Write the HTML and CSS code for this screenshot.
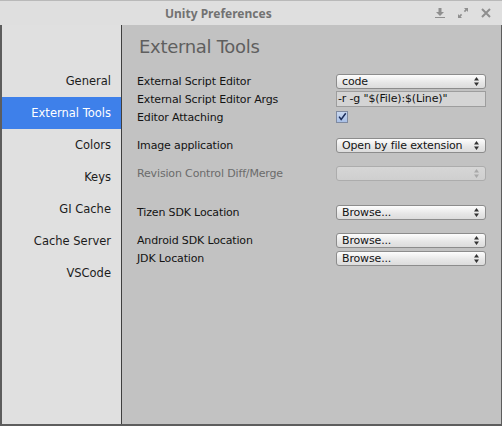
FILE: index.html
```html
<!DOCTYPE html>
<html>
<head>
<meta charset="utf-8">
<link rel="stylesheet" href="styles.css">
</head>
<body>
<div class="window">
  <div class="titlebar">
    <span class="title">Unity Preferences</span>
    <div class="tb-icons">
      <svg class="tb-icon" width="10" height="10" viewBox="0 0 10 10"><path d="M3.5 0h3v4h2.5l-4 4-4-4h2.5z M0 9h10v1H0z" fill="#8f8f8f"/></svg>
      <svg class="tb-icon" width="10" height="10" viewBox="0 0 10 10"><path d="M6 0h4v4L8.6 2.6 7 4.2 5.8 3 7.4 1.4z M0 10V6l1.4 1.4L3 5.8 4.2 7 2.6 8.6 4 10z" fill="#8f8f8f"/></svg>
      <svg class="tb-icon" width="10" height="10" viewBox="0 0 10 10"><path d="M1 1l8 8M9 1l-8 8" stroke="#8f8f8f" stroke-width="2"/></svg>
    </div>
  </div>
  <div class="main">
    <ul class="sidebar">
      <li class="nav">General</li>
      <li class="nav active">External Tools</li>
      <li class="nav">Colors</li>
      <li class="nav">Keys</li>
      <li class="nav">GI Cache</li>
      <li class="nav">Cache Server</li>
      <li class="nav">VSCode</li>
    </ul>
    <div class="content">
      <h1 class="heading">External Tools</h1>
      <div class="form">
        <div class="row">
          <span class="label">External Script Editor</span>
          <div class="popup"><span>code</span><svg class="arrows" width="5" height="9" viewBox="0 0 5 9"><path d="M2.5 0L5 3.5H0z M2.5 9L0 5.5h5z" fill="#333"/></svg></div>
        </div>
        <div class="row">
          <span class="label">External Script Editor Args</span>
          <div class="field">-r -g "$(File):$(Line)"</div>
        </div>
        <div class="row">
          <span class="label">Editor Attaching</span>
          <div class="check"><svg width="12" height="12" viewBox="0 0 12 12"><path d="M2.5 5.5l2.5 3.5L10.5 1.5" fill="none" stroke="#1b2d5a" stroke-width="1.8"/></svg></div>
        </div>
        <div class="row gap">
          <span class="label">Image application</span>
          <div class="popup"><span>Open by file extension</span><svg class="arrows" width="5" height="9" viewBox="0 0 5 9"><path d="M2.5 0L5 3.5H0z M2.5 9L0 5.5h5z" fill="#333"/></svg></div>
        </div>
        <div class="row gap">
          <span class="label disabled">Revision Control Diff/Merge</span>
          <div class="popup off"><span></span><svg class="arrows" width="5" height="9" viewBox="0 0 5 9"><path d="M2.5 0L5 3.5H0z M2.5 9L0 5.5h5z" fill="#a8a8a8"/></svg></div>
        </div>
        <div class="row biggap">
          <span class="label">Tizen SDK Location</span>
          <div class="popup"><span>Browse...</span><svg class="arrows" width="5" height="9" viewBox="0 0 5 9"><path d="M2.5 0L5 3.5H0z M2.5 9L0 5.5h5z" fill="#333"/></svg></div>
        </div>
        <div class="row gap">
          <span class="label">Android SDK Location</span>
          <div class="popup"><span>Browse...</span><svg class="arrows" width="5" height="9" viewBox="0 0 5 9"><path d="M2.5 0L5 3.5H0z M2.5 9L0 5.5h5z" fill="#333"/></svg></div>
        </div>
        <div class="row">
          <span class="label">JDK Location</span>
          <div class="popup"><span>Browse...</span><svg class="arrows" width="5" height="9" viewBox="0 0 5 9"><path d="M2.5 0L5 3.5H0z M2.5 9L0 5.5h5z" fill="#333"/></svg></div>
        </div>
      </div>
    </div>
  </div>
</div>
</body>
</html>
```

FILE: styles.css
```css
html, body {
  margin: 0;
  padding: 0;
  background: #dedede;
}
.window {
  width: 502px;
  height: 426px;
  display: flex;
  flex-direction: column;
  font-family: "DejaVu Sans", sans-serif;
  box-sizing: border-box;
}
.titlebar {
  height: 25px;
  flex: none;
  background: #dfdfdf;
  border-top: 1px solid #b9b9b9;
  box-sizing: border-box;
  display: flex;
  align-items: center;
  position: relative;
}
.title {
  font-family: "Noto Sans", sans-serif;
  font-weight: bold;
  font-size: 12px;
  color: #727272;
  margin-left: 165px;
}
.tb-icons {
  margin-left: auto;
  margin-right: 11px;
  display: flex;
  gap: 13px;
  align-items: center;
}
.main {
  flex: 1;
  display: flex;
  border-left: 2px solid #5d5d5d;
  border-right: 1px solid #5d5d5d;
  border-bottom: 2px solid #5d5d5d;
  min-height: 0;
}
.sidebar {
  list-style: none;
  margin: 0;
  padding: 40px 0 0 0;
  width: 119px;
  flex: none;
  background: #e0e0e0;
  border-right: 1px solid #3f3f3f;
}
.nav {
  height: 32px;
  box-sizing: border-box;
  padding-top: 1px;
  line-height: 31px;
  text-align: right;
  padding-right: 10px;
  font-size: 11.5px;
  color: #1c1c1c;
}
.nav.active {
  background: #3e80ea;
  color: #ffffff;
}
.content {
  flex: 1;
  background: #c2c2c2;
  padding: 9px 0 0 15px;
}
.heading {
  margin: 0 0 12px 2px;
  font-size: 18px;
  font-weight: normal;
  letter-spacing: -0.3px;
  line-height: 26px;
  color: #5f5f5f;
}
.form {
  display: flex;
  flex-direction: column;
}
.row {
  height: 18px;
  display: grid;
  grid-template-columns: 199px 150px;
  align-items: center;
}
.row.gap { margin-top: 10px; }
.row.biggap { margin-top: 21px; }
.label {
  font-size: 11px;
  letter-spacing: -0.15px;
  color: #131313;
}
.label.disabled { color: #6b6b6b; }
.popup {
  height: 15px;
  box-sizing: border-box;
  border: 1px solid #8c8c8c;
  border-radius: 3px;
  background: linear-gradient(#fdfdfd, #e6e6e6 60%, #dcdcdc);
  display: flex;
  align-items: center;
  padding: 0 6px 0 5px;
  font-size: 11px;
  letter-spacing: -0.15px;
  color: #141414;
}
.popup span { flex: 1; }
.popup.off {
  border-color: #acacac;
  background: linear-gradient(#d6d6d6, #cfcfcf);
}
.field {
  height: 16px;
  box-sizing: border-box;
  border: 1px solid #9d9d9d;
  background: #d4d4d4;
  font-size: 11px;
  letter-spacing: -0.15px;
  line-height: 14px;
  padding-left: 1px;
  color: #111;
}
.check {
  width: 12px;
  height: 12px;
  box-sizing: border-box;
  border: 1px solid #7f8aa0;
  background: linear-gradient(#c9d8f0, #a9c0e6);
  display: flex;
  align-items: center;
  justify-content: center;
}
.check svg { display: block; }
```
